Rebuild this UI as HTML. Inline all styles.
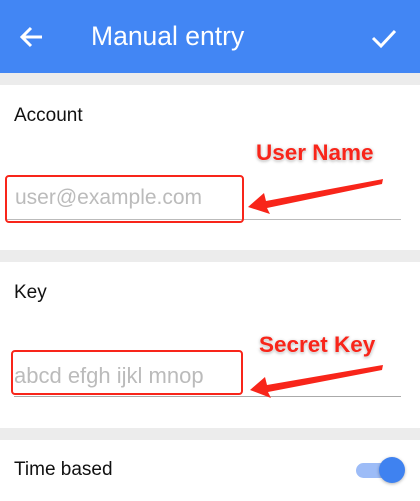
<!DOCTYPE html>
<html><head><style>
body{margin:0;width:420px;height:501px;overflow:hidden;background:#fff;font-family:"Liberation Sans",sans-serif;position:relative}
div{position:absolute}
.t{white-space:nowrap}
</style></head><body>
<div style="left:0;top:0;width:420px;height:73px;background:#4286f4"></div>
<svg style="position:absolute;left:0;top:0" width="420" height="73">
<path d="M42 37H22M31 28l-9 9 9 9" stroke="#fff" stroke-width="3" fill="none"/>
<path d="M373 38l8 8 14-15" stroke="#fff" stroke-width="3" fill="none"/>
</svg>
<div class="t" style="left:91px;top:21px;font-size:26.5px;color:#fff">Manual entry</div>
<div style="left:0;top:73px;width:420px;height:12px;background:#ececec"></div>
<div class="t" style="left:14px;top:105px;font-size:19px;color:#111">Account</div>
<div class="t" style="left:256px;top:140px;font-size:22.5px;font-weight:bold;color:#f8251a;text-shadow:0 0 2px #fff,0 1px 3px #999">User Name</div>
<div style="left:5px;top:219px;width:396px;height:1px;background:#bbb"></div>
<div class="t" style="left:15px;top:186px;font-size:21px;color:#bbb">user@example.com</div>
<div style="left:5px;top:175px;width:235px;height:44px;border:2.5px solid #f8251a;border-radius:4px"></div>
<div style="left:0;top:250px;width:420px;height:12px;background:#ececec"></div>
<div class="t" style="left:14px;top:282px;font-size:19px;color:#111">Key</div>
<div class="t" style="left:259px;top:332px;font-size:22.5px;font-weight:bold;color:#f8251a;text-shadow:0 0 2px #fff,0 1px 3px #999">Secret Key</div>
<div style="left:14px;top:396px;width:387px;height:1px;background:#aaa"></div>
<div class="t" style="left:14px;top:363px;font-size:22px;color:#bbb">abcd efgh ijkl mnop</div>
<div style="left:11px;top:350px;width:228px;height:41px;border:2.5px solid #f8251a;border-radius:4px"></div>
<svg style="position:absolute;left:0;top:0" width="420" height="501">
<path d="M383 179L382 184L267 208L270 214L248 207L264 193L266 201Z" fill="#f8251a"/>
<path d="M383 365L382 370L268 392L271 398L250 390L265 377L267 385Z" fill="#f8251a"/>
</svg>
<div style="left:0;top:428px;width:420px;height:12px;background:#ececec"></div>
<div class="t" style="left:14px;top:459px;font-size:19px;color:#111">Time based</div>
<div style="left:356px;top:463px;width:38px;height:15px;border-radius:8px;background:#9dbcf7"></div>
<div style="left:379px;top:457px;width:26px;height:26px;border-radius:50%;background:#3f82f0;box-shadow:0 1px 3px rgba(0,0,0,.3)"></div>
</body></html>
